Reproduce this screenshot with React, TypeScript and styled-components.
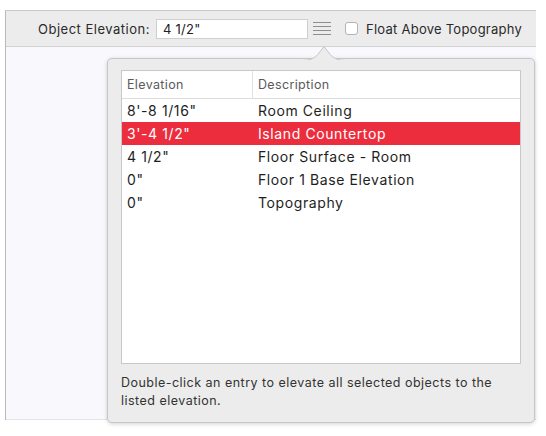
import React from "react";
import styled, { createGlobalStyle } from "styled-components";

const Global = createGlobalStyle`
  html, body { margin: 0; padding: 0; background: #ffffff; }
  body { font-family: Inter, "Liberation Sans", Arial, sans-serif; -webkit-font-smoothing: antialiased; }
`;

const Page = styled.div`
  width: 546px;
  height: 436px;
  padding: 10px 0 0 5px;
  box-sizing: border-box;
`;

const Window = styled.div`
  position: relative;
  width: 531px;
  height: 410px;
  display: flex;
  flex-direction: column;
  border-left: 1px solid #b9b9bd;
  border-top: 1px solid #c9c9c9;
  box-sizing: border-box;
  background: #f9f9fd;
`;

const Toolbar = styled.div`
  height: 36px;
  flex: none;
  display: flex;
  align-items: center;
  background: #ececec;
  border-bottom: 1px solid #d3d3d3;
  box-sizing: border-box;
  padding-left: 32px;
  font-size: 13px;
  letter-spacing: 0.25px;
  color: #2a2a2a;
`;

const Label = styled.span`
  width: 118px;
  flex: none;
  white-space: nowrap;
  letter-spacing: 0.5px;
`;

const Field = styled.div`
  width: 152px;
  height: 20px;
  box-sizing: border-box;
  background: #ffffff;
  border: 1px solid #cfcfcf;
  display: flex;
  align-items: center;
  padding-left: 6px;
  font-size: 13px;
  color: #222;
`;

const MenuButton = styled.div`
  width: 18px;
  height: 13px;
  margin-left: 5px;
  display: flex;
  flex-direction: column;
  justify-content: space-between;
`;

const MenuLine = styled.div`
  height: 1px;
  background: #8e8e8e;
`;

const Check = styled.label`
  display: flex;
  align-items: center;
  margin-left: 14px;
  gap: 8px;
  white-space: nowrap;
`;

const CheckBox = styled.span`
  width: 13px;
  height: 13px;
  box-sizing: border-box;
  border: 1px solid #b4b4b4;
  border-radius: 3px;
  background: #ffffff;
`;

const Content = styled.div`
  flex: 1;
  background: #f9f9fd;
  border-bottom: 1px solid #e3e3e8;
`;

const Popover = styled.div`
  position: absolute;
  left: 101px;
  top: 47px;
  width: 428px;
  height: 365px;
  box-sizing: border-box;
  background: #ececec;
  border: 1px solid #c6c6c6;
  border-radius: 5px;
  box-shadow: 0 1px 4px rgba(0, 0, 0, 0.18);
  padding: 11px 13px 0 13px;
  display: flex;
  flex-direction: column;
`;

const Arrow = styled.svg`
  position: absolute;
  left: 193px;
  top: -14px;
`;

const Table = styled.div`
  height: 294px;
  background: #ffffff;
  border: 1px solid #c8c8c8;
  box-sizing: border-box;
  display: flex;
  flex-direction: column;
`;

const HeadRow = styled.div`
  height: 27px;
  flex: none;
  display: grid;
  grid-template-columns: 131px 1fr;
  align-items: center;
  border-bottom: 1px solid #dedede;
  font-size: 12.5px;
  letter-spacing: 0.35px;
  color: #5a5a5a;
`;

const HeadCell = styled.div<{ $divider?: boolean }>`
  padding-left: 5px;
  height: 100%;
  display: flex;
  align-items: center;
  border-right: ${(p) => (p.$divider ? "1px solid #e2e2e2" : "none")};
`;

const Row = styled.div<{ $selected?: boolean }>`
  height: 23px;
  display: grid;
  grid-template-columns: 131px 1fr;
  align-items: center;
  font-size: 14px;
  letter-spacing: 0.6px;
  background: ${(p) => (p.$selected ? "#ec2d3e" : "transparent")};
  color: ${(p) => (p.$selected ? "#ffffff" : "#1e1e1e")};
`;

const Cell = styled.div`
  padding-left: 5px;
  white-space: nowrap;
`;

const Note = styled.p`
  margin: 10px 0 0 0;
  font-size: 12.5px;
  letter-spacing: 0.48px;
  line-height: 18px;
  color: #333333;
  white-space: nowrap;
`;

const rows = [
  { elevation: "8'-8 1/16\"", description: "Room Ceiling" },
  { elevation: "3'-4 1/2\"", description: "Island Countertop", selected: true },
  { elevation: "4 1/2\"", description: "Floor Surface - Room" },
  { elevation: "0\"", description: "Floor 1 Base Elevation" },
  { elevation: "0\"", description: "Topography" },
];

export default function App() {
  return (
    <>
      <Global />
      <Page>
        <Window>
          <Toolbar>
            <Label>Object Elevation:</Label>
            <Field>4 1/2"</Field>
            <MenuButton>
              <MenuLine />
              <MenuLine />
              <MenuLine />
              <MenuLine />
            </MenuButton>
            <Check>
              <CheckBox />
              <span>Float Above Topography</span>
            </Check>
          </Toolbar>
          <Content />
          <Popover>
            <Arrow width="46" height="16" viewBox="0 0 46 16">
              <path d="M0 15.5 C10 15.5 14 13 18 8 L23 1.5 L28 8 C32 13 36 15.5 46 15.5" fill="#ececec" stroke="#c6c6c6" strokeWidth="1" />
              <rect x="0" y="15" width="46" height="1" fill="#ececec" />
            </Arrow>
            <Table>
              <HeadRow>
                <HeadCell $divider>Elevation</HeadCell>
                <HeadCell>Description</HeadCell>
              </HeadRow>
              {rows.map((r, i) => (
                <Row key={i} $selected={r.selected}>
                  <Cell>{r.elevation}</Cell>
                  <Cell>{r.description}</Cell>
                </Row>
              ))}
            </Table>
            <Note>
              Double-click an entry to elevate all selected objects to the
              <br />
              listed elevation.
            </Note>
          </Popover>
        </Window>
      </Page>
    </>
  );
}
